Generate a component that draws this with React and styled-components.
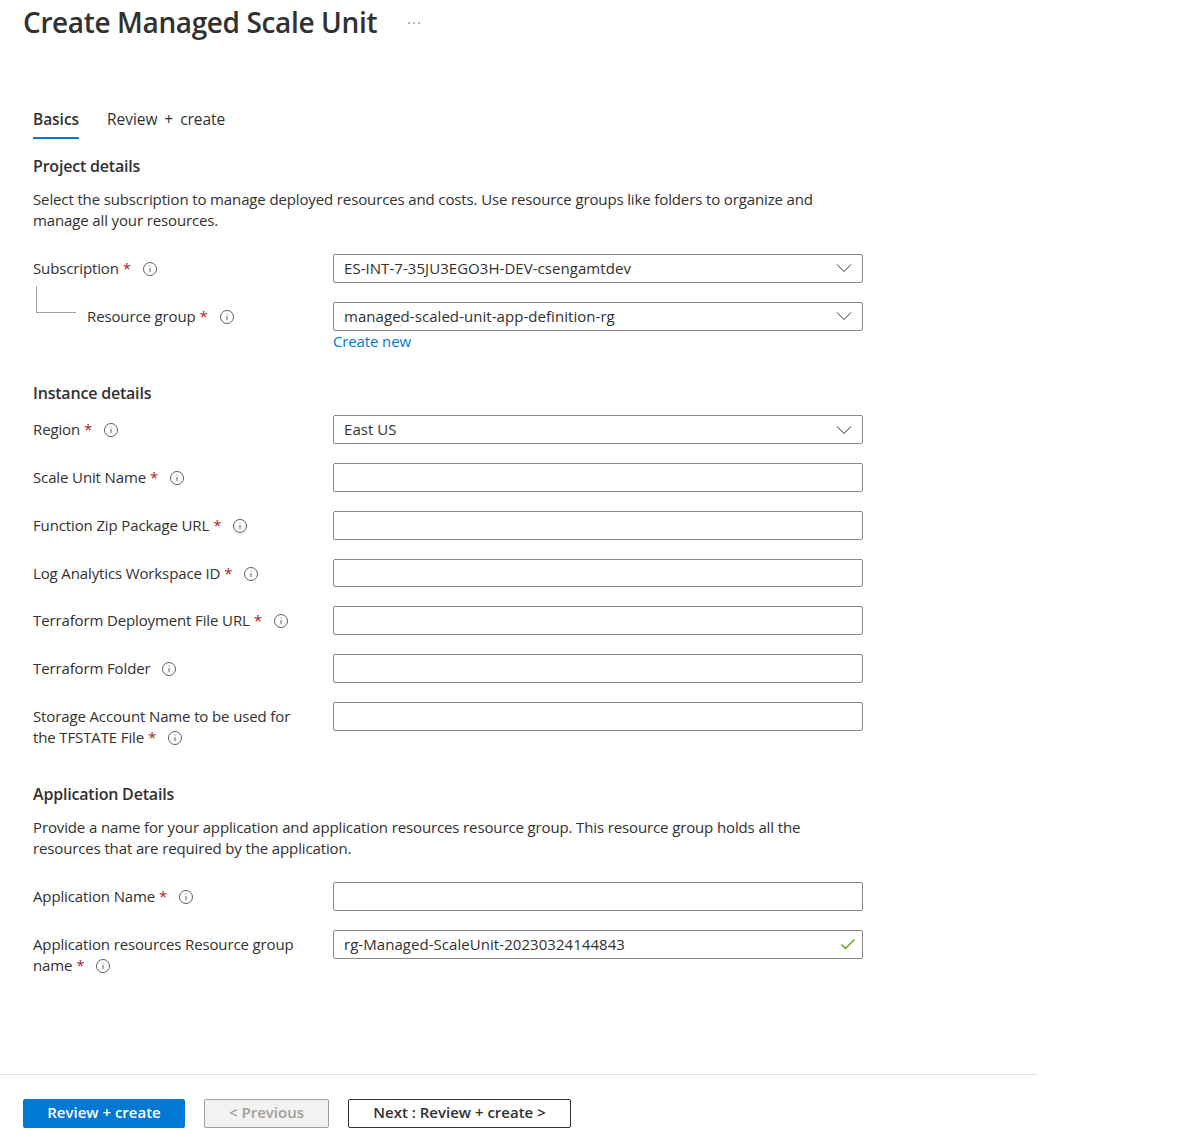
import React from "react";
import styled, { createGlobalStyle } from "styled-components";

const GlobalStyle = createGlobalStyle`
  html, body {
    margin: 0;
    padding: 0;
    background: #fff;
  }
  * {
    box-sizing: border-box;
  }
`;

const Page = styled.div`
  width: 1200px;
  height: 1140px;
  display: flex;
  flex-direction: column;
  font-family: "Open Sans", "Noto Sans", sans-serif;
  font-size: 15px;
  letter-spacing: -0.13px;
  line-height: 21px;
  color: #323130;
`;

const TitleBar = styled.header`
  display: flex;
  align-items: center;
  height: 45px;
  padding-left: 23px;
`;

const Title = styled.h1`
  margin: 0;
  font-size: 28px;
  font-weight: 600;
  line-height: 45px;
  letter-spacing: -0.37px;
`;

const MoreButton = styled.span`
  margin-left: 30px;
  display: flex;
  align-items: center;
  color: #605e5c;
`;

const Body = styled.main`
  flex: 1;
  padding: 61px 0 0 33px;
`;

const Tabs = styled.nav`
  display: flex;
  gap: 28px;
  height: 33px;
`;

const Tab = styled.span`
  height: 33px;
  padding-top: 3px;
  font-size: 15.5px;
  letter-spacing: -0.05px;
  word-spacing: 3px;
  font-weight: ${(p) => (p.$active ? 600 : 400)};
  border-bottom: 2px solid ${(p) => (p.$active ? "#0078d4" : "transparent")};
`;

const SectionTitle = styled.h2`
  margin: ${(p) => p.$top}px 0 0;
  font-size: 16px;
  font-weight: 600;
  line-height: 24px;
  letter-spacing: -0.2px;
`;

const Paragraph = styled.p`
  margin: 11px 0 0;
  width: 800px;
`;

const Fields = styled.div`
  margin-top: ${(p) => p.$top}px;
  display: flex;
  flex-direction: column;
  gap: 19px;
`;

const Row = styled.div`
  position: relative;
  display: grid;
  grid-template-columns: 300px 530px;
`;

const Label = styled.div`
  width: 270px;
  padding: 4px 0 0 ${(p) => (p.$nested ? 54 : 0)}px;
`;

const Required = styled.span`
  color: #a4262c;
  margin-left: 4px;
`;

const InfoIcon = styled.svg`
  width: 16px;
  height: 16px;
  margin-left: 11px;
  vertical-align: -3px;
`;

const Connector = styled.span`
  position: absolute;
  left: 3px;
  top: -16px;
  width: 40px;
  height: 27px;
  border-left: 1px solid #a19f9d;
  border-bottom: 1px solid #a19f9d;
`;

const Control = styled.div`
  display: flex;
  flex-direction: column;
`;

const Box = styled.div`
  height: 28.83px;
  display: flex;
  align-items: center;
  justify-content: space-between;
  padding: 0 8px 0 10px;
  background: #fff;
  border: 1px solid #8a8886;
  border-radius: 2px;
  white-space: nowrap;
  letter-spacing: 0.05px;
`;

const LinkText = styled.a`
  color: #0078d4;
  line-height: 21px;
  text-decoration: none;
`;

const Footer = styled.footer`
  width: 1037px;
  height: 66px;
  padding: 24px 0 0 23px;
  border-top: 1px solid #e1dfdd;
  display: flex;
  align-items: flex-start;
`;

const Button = styled.button`
  width: ${(p) => p.$width}px;
  height: 29px;
  margin-right: ${(p) => p.$gap}px;
  padding: 0 0 2px;
  font: inherit;
  font-weight: 600;
  letter-spacing: 0;
  line-height: 25px;
  border-radius: 2px;
  color: ${(p) => (p.$variant === "primary" ? "#fff" : p.$variant === "disabled" ? "#a19f9d" : "#323130")};
  background: ${(p) => (p.$variant === "primary" ? "#0078d4" : p.$variant === "disabled" ? "#f3f2f1" : "#fff")};
  border: 1px solid ${(p) => (p.$variant === "primary" ? "#0078d4" : p.$variant === "disabled" ? "#a19f9d" : "#323130")};
`;

const ChevronIcon = styled.svg`
  margin-right: 2px;
`;

const CheckIcon = styled.svg`
  margin-right: -2px;
`;

const Info = () => (
  <InfoIcon viewBox="0 0 16 16" fill="none" stroke="#605e5c">
    <circle cx="8" cy="8" r="6.5" />
    <path d="M8 7v4.2" />
    <circle cx="8" cy="5" r="0.6" fill="#605e5c" stroke="none" />
  </InfoIcon>
);

const Chevron = () => (
  <ChevronIcon width="16" height="16" viewBox="0 0 16 16" fill="none" stroke="#323130">
    <path d="M1 4.5 8 11.5 15 4.5" />
  </ChevronIcon>
);

const Check = () => (
  <CheckIcon width="16" height="16" viewBox="0 0 16 16" fill="none" stroke="#57a300" strokeWidth="1.3">
    <path d="M1.5 8.5 5.5 12.5 14.5 3.5" />
  </CheckIcon>
);

const Field = ({ label, required = true, value, select, valid, nested, children }) => (
  <Row>
    {nested && <Connector />}
    <Label $nested={nested}>
      {label}
      {required && <Required>*</Required>}
      <Info />
    </Label>
    <Control>
      <Box>
        <span>{value}</span>
        {select && <Chevron />}
        {valid && <Check />}
      </Box>
      {children}
    </Control>
  </Row>
);

const App = () => (
  <Page>
    <GlobalStyle />
    <TitleBar>
      <Title>Create Managed Scale Unit</Title>
      <MoreButton>
        <svg width="14" height="4" viewBox="0 0 14 4" fill="#605e5c">
          <circle cx="2" cy="2" r="0.8" />
          <circle cx="7" cy="2" r="0.8" />
          <circle cx="12" cy="2" r="0.8" />
        </svg>
      </MoreButton>
    </TitleBar>
    <Body>
      <Tabs>
        <Tab $active>Basics</Tab>
        <Tab>Review + create</Tab>
      </Tabs>
      <SectionTitle $top={15}>Project details</SectionTitle>
      <Paragraph>
        Select the subscription to manage deployed resources and costs. Use resource groups like folders to organize and
        manage all your resources.
      </Paragraph>
      <Fields $top={23}>
        <Field label="Subscription" value="ES-INT-7-35JU3EGO3H-DEV-csengamtdev" select />
        <Field label="Resource group" value="managed-scaled-unit-app-definition-rg" select nested>
          <LinkText>Create new</LinkText>
        </Field>
      </Fields>
      <SectionTitle $top={29}>Instance details</SectionTitle>
      <Fields $top={10.5}>
        <Field label="Region" value="East US" select />
        <Field label="Scale Unit Name" />
        <Field label="Function Zip Package URL" />
        <Field label="Log Analytics Workspace ID" />
        <Field label="Terraform Deployment File URL" />
        <Field label="Terraform Folder" required={false} />
        <Field label="Storage Account Name to be used for the TFSTATE File" />
      </Fields>
      <SectionTitle $top={33.5}>Application Details</SectionTitle>
      <Paragraph>
        Provide a name for your application and application resources resource group. This resource group holds all the
        resources that are required by the application.
      </Paragraph>
      <Fields $top={23.3}>
        <Field label="Application Name" />
        <Field label="Application resources Resource group name" value="rg-Managed-ScaleUnit-20230324144843" valid />
      </Fields>
    </Body>
    <Footer>
      <Button $variant="primary" $width={162} $gap={19}>Review + create</Button>
      <Button $variant="disabled" $width={125} $gap={19}>&lt; Previous</Button>
      <Button $width={223}>Next : Review + create &gt;</Button>
    </Footer>
  </Page>
);

export default App;
